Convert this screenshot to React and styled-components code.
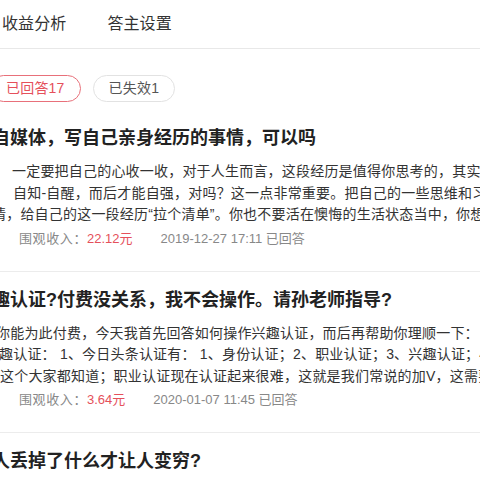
import React from "react";
import styled, { createGlobalStyle } from "styled-components";

const GlobalStyle = createGlobalStyle`
body {
  margin: 0;
  background: #fff;
  overflow: hidden;
  font-family: "Liberation Sans", "Noto Sans CJK SC", sans-serif;
}
`

const Page = styled.div`
width: 480px;
height: 480px;
overflow: hidden;
`

const Column = styled.div`
margin-left: -10px;
width: 1000px;
`

const Nav = styled.nav`
height: 49px;
padding: 0 0 5px 12px;
box-sizing: border-box;
display: flex;
align-items: center;
gap: 41px;
border-bottom: 1px solid #e8e8e8;
margin-left: -10px;
padding-left: 22px;
width: 520px;
`

const NavItem = styled.span`
font-size: 16px;
color: #333;
letter-spacing: 0.1px;
`

const Pills = styled.div`
display: flex;
gap: 12px;
margin-top: 26px;
`

const Pill = styled.span`
display: inline-block;
height: 27px;
box-sizing: border-box;
padding: 0 15px;
line-height: 25px;
font-size: 14px;
letter-spacing: 0.2px;
border-radius: 14px;
border: 1px solid ${p => (p.$active ? "#e8707a" : "#e2e2e2")};
color: ${p => (p.$active ? "#e5505b" : "#555")};
`

const Card = styled.article`
padding: ${p => (p.$first ? "24px" : "16px")} 0 22px;
border-bottom: 1px solid #ececec;
margin-left: -10px;
padding-left: 10px;
width: 520px;
`

const Title = styled.h3`
margin: 0 0 11px 2px;
font-size: 18px;
line-height: 24px;
font-weight: 700;
color: #222;
white-space: nowrap;
`

const Body = styled.div`
font-size: 14px;
line-height: 21.5px;
letter-spacing: 0.2px;
color: #333;
`

const Line = styled.div`
white-space: nowrap;
padding-left: ${p => p.$indent}px;
`

const Meta = styled.div`
margin-top: 3px;
padding-left: 29px;
font-size: 13px;
line-height: 20px;
color: #888;
white-space: nowrap;
`

const Label = styled.span`
letter-spacing: 0.6px;
`

const Money = styled.span`
color: #e5505b;
`

const Date = styled.span`
margin-left: 28px;
color: #888;
`

const answers = [
  {
    title: "自媒体，写自己亲身经历的事情，可以吗",
    lines: [
      [22, "一定要把自己的心收一收，对于人生而言，这段经历是值得你思考的，其实"],
      [23, "自知-自醒，而后才能自强，对吗？这一点非常重要。把自己的一些思维和习惯"],
      [2, "情，给自己的这一段经历“拉个清单”。你也不要活在懊悔的生活状态当中，你想"],
    ],
    money: "22.12元",
    date: "2019-12-27 17:11 已回答",
  },
  {
    title: "趣认证?付费没关系，我不会操作。请孙老师指导?",
    lines: [
      [6, "你能为此付费，今天我首先回答如何操作兴趣认证，而后再帮助你理顺一下："],
      [9, "趣认证： 1、今日头条认证有： 1、身份认证；2、职业认证；3、兴趣认证；4"],
      [10, "这个大家都知道；职业认证现在认证起来很难，这就是我们常说的加V，这需要"],
    ],
    money: "3.64元",
    date: "2020-01-07 11:45 已回答",
  },
  {
    title: "人丢掉了什么才让人变穷?",
    lines: [],
  },
];

const App = () => {
  return (
    <Page>
      <GlobalStyle />
      <Column>
        <Nav>
          <NavItem>收益分析</NavItem>
          <NavItem>答主设置</NavItem>
        </Nav>
        <Pills>
          <Pill $active>已回答17</Pill>
          <Pill>已失效1</Pill>
        </Pills>
        {answers.map((a, i) => (
          <Card key={i} $first={i === 0}>
            <Title>{a.title}</Title>
            {a.lines.length > 0 && (
              <>
                <Body>
                  {a.lines.map(([indent, text], j) => (
                    <Line key={j} $indent={indent}>{text}</Line>
                  ))}
                </Body>
                <Meta>
                  <Label>围观收入：</Label>
                  <Money>{a.money}</Money>
                  <Date>{a.date}</Date>
                </Meta>
              </>
            )}
          </Card>
        ))}
      </Column>
    </Page>
  );
};

export default App;
